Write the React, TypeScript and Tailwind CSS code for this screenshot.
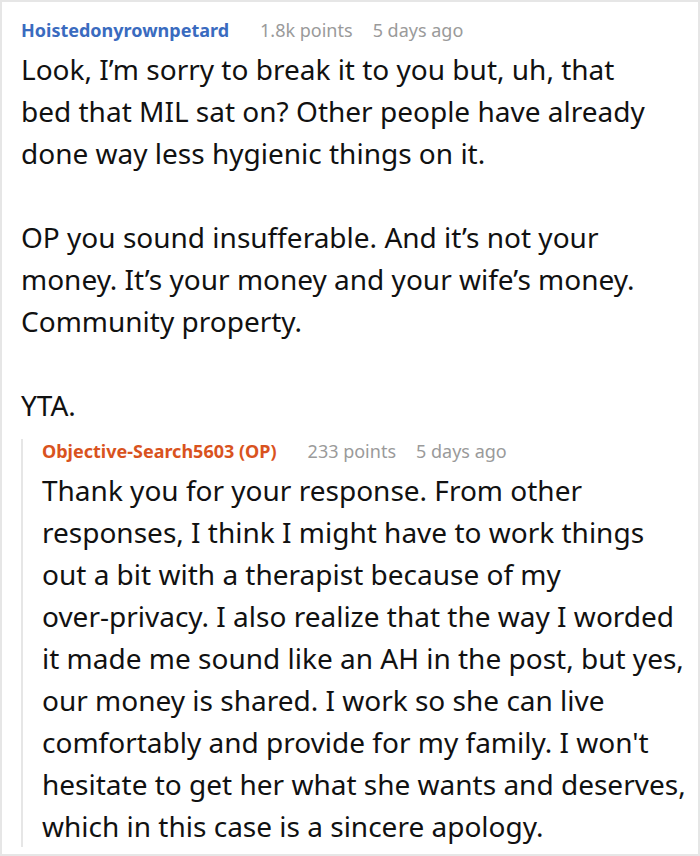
import React from "react";

const font = { fontFamily: '"Noto Sans", "Open Sans", sans-serif' };

function Meta({ name, nameClass, points, ago, extra }: { name: string; nameClass: string; points: string; ago: string; extra?: string }) {
  return (
    <div className={`flex items-baseline text-[18px] leading-[24px] ${extra ?? ""}`}>
      <span className={`font-bold ${nameClass}`}>{name}</span>
      <span className="ml-[31px] text-[#9a9a9a]">{points}</span>
      <span className="ml-[20px] text-[#9a9a9a]">{ago}</span>
    </div>
  );
}

export default function App() {
  return (
    <div style={font} className="w-[700px] h-[856px] bg-white border-2 border-[#e6e6e6] overflow-hidden">
      <div className="pl-[19px] pr-[8px] pt-[16px]">
        <Meta name="Hoistedonyrownpetard" nameClass="text-[#3a6bbf]" points="1.8k points" ago="5 days ago" />
        <div className="mt-[6px] mr-[35px] text-[28px] leading-[42px] text-[#111]">
          <p>Look, I’m sorry to break it to you but, uh, that bed that MIL sat on? Other people have already done way less hygienic things on it.</p>
          <p className="mt-[42px]">OP you sound insufferable. And it’s not your money. It’s your money and your wife’s money. Community property.</p>
          <p className="mt-[42px]">YTA.</p>
        </div>
        <div className="mt-[24px] border-l-2 border-[#e6e6e6] pl-[19px]">
          <Meta name="Objective-Search5603 (OP)" nameClass="text-[#d9531e]" points="233 points" ago="5 days ago" extra="-mt-[11px]" />
          <div className="mt-[6px] -mb-[13px] text-[28px] leading-[42px] text-[#111]">
            <p>
              Thank you for your response. From other responses, I think I might have to work things out a bit with a therapist because of my{" "}
              <span className="whitespace-nowrap">over-privacy.</span> I also realize that the way I worded it made me sound like an AH in the post, but yes, our money is shared. I work so she can live comfortably and provide for my family. I won't hesitate to get her what she wants and deserves, which in this case is a sincere apology.
            </p>
          </div>
        </div>
      </div>
    </div>
  );
}
